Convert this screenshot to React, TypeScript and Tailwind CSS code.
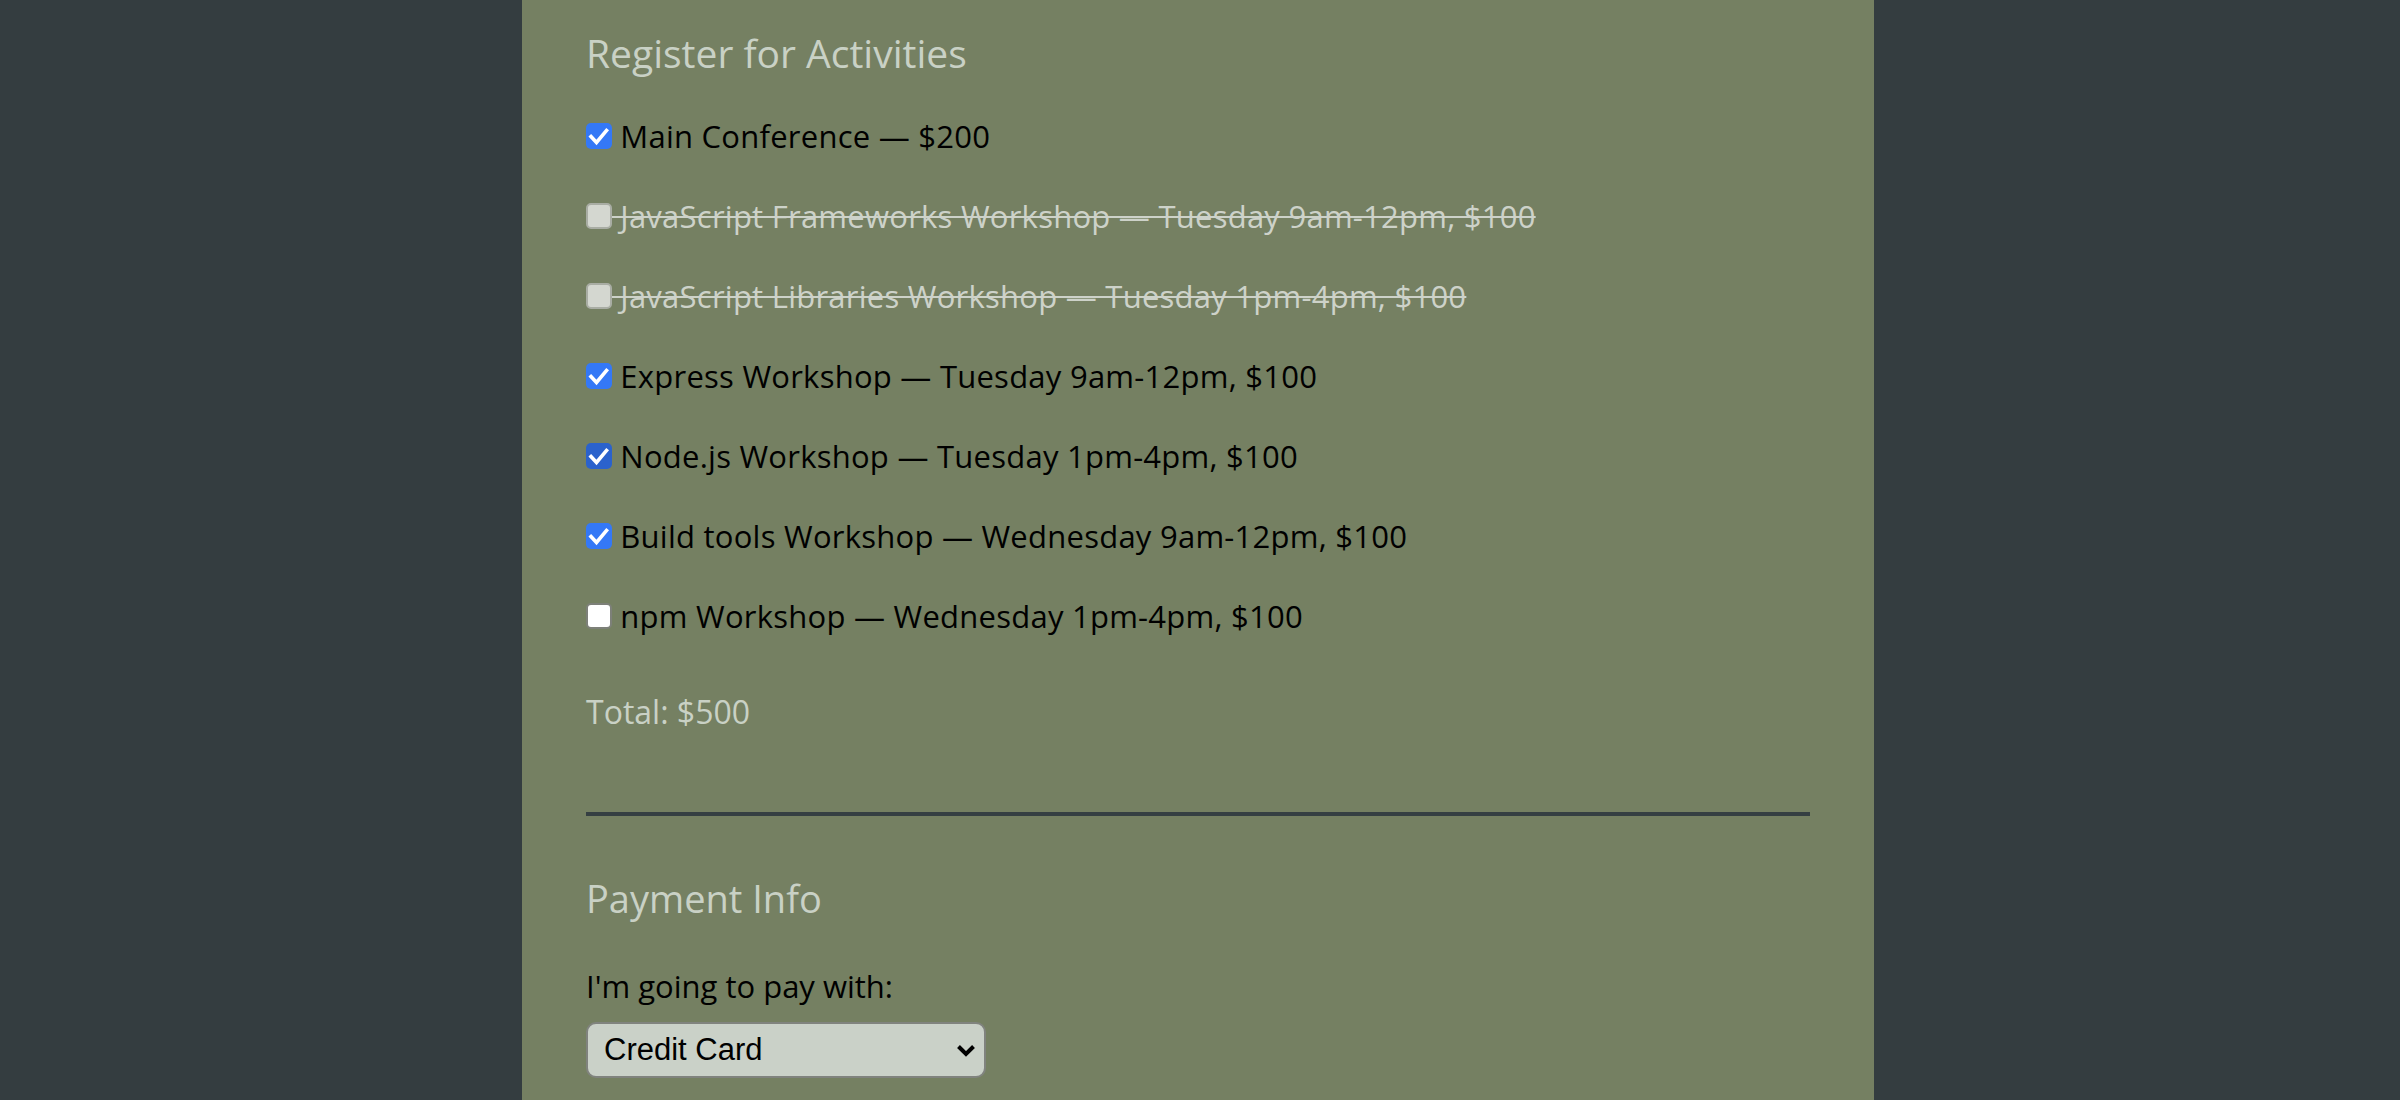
import React from "react";

const Check = ({ dark }: { dark?: boolean }) => (
  <span
    className={`flex h-[26px] w-[26px] shrink-0 items-center justify-center rounded-[5px] ${
      dark ? "bg-[#2b62cc]" : "bg-[#3478f6]"
    }`}
  >
    <svg width="26" height="26" viewBox="0 0 26 26">
      <path d="M5 13.5 L10.5 19.5 L20.5 7.5" fill="none" stroke="#fff" strokeWidth="3.6" strokeLinecap="square" strokeLinejoin="miter" />
    </svg>
  </span>
);

const Empty = () => (
  <span className="h-[26px] w-[26px] shrink-0 rounded-[5px] border-2 border-[#7d8079] bg-white" />
);

const Disabled = () => (
  <span className="h-[26px] w-[26px] shrink-0 rounded-[5px] border-2 border-[#a9ada4] bg-[#d4d7d0]" />
);

type Row = { text: string; state: "on" | "onDark" | "off" | "disabled" };

const rows: Row[] = [
  { text: "Main Conference — $200", state: "on" },
  { text: "JavaScript Frameworks Workshop — Tuesday 9am-12pm, $100", state: "disabled" },
  { text: "JavaScript Libraries Workshop — Tuesday 1pm-4pm, $100", state: "disabled" },
  { text: "Express Workshop — Tuesday 9am-12pm, $100", state: "on" },
  { text: "Node.js Workshop — Tuesday 1pm-4pm, $100", state: "onDark" },
  { text: "Build tools Workshop — Wednesday 9am-12pm, $100", state: "on" },
  { text: "npm Workshop — Wednesday 1pm-4pm, $100", state: "off" },
];

export default function App() {
  return (
    <div className="h-[1100px] w-full overflow-hidden bg-[#343d40] font-['Open_Sans',sans-serif]">
      <div className="ml-[calc(50%-678px)] min-h-[1100px] w-[1352px] bg-[#758062] px-[64px]">
        <div className="flex h-[96px] items-center pt-[8px]">
          <h2 className="text-[39px] leading-none text-[#c9d1c5]">Register for Activities</h2>
        </div>
        {rows.map((r) => (
          <label key={r.text} className="flex h-[80px] items-center">
            {r.state === "on" && <Check />}
            {r.state === "onDark" && <Check dark />}
            {r.state === "off" && <Empty />}
            {r.state === "disabled" && <Disabled />}
            <span
              className={`whitespace-pre text-[31px] leading-none tracking-[0.25px] ${
                r.state === "disabled" ? "text-[#cdd2c9] line-through decoration-[2px]" : "text-black"
              }`}
            >
              {" " + r.text}
            </span>
          </label>
        ))}
        <div className="flex h-[112px] items-center">
          <p className="text-[32px] leading-none text-[#c9d1c5]">Total: $500</p>
        </div>
        <div className="mt-[44px] h-[4px] w-full bg-[#353f42]" />
        <div className="mt-[52px] flex h-[60px] items-center">
          <h2 className="text-[38px] leading-none text-[#c9d1c5]">Payment Info</h2>
        </div>
        <div className="mt-[28px] flex h-[60px] items-center">
          <label className="text-[31px] leading-none text-black">I'm going to pay with:</label>
        </div>
        <div className="relative mt-[6px] h-[56px] w-[400px]">
          <select
            defaultValue="credit card"
            className="h-full w-full appearance-none rounded-[10px] border-2 border-[#80837e] bg-[#cad1c8] pl-[16px] font-['Liberation_Sans',Arial,sans-serif] text-[31px] text-black outline-none"
          >
            <option value="credit card">Credit Card</option>
            <option value="paypal">PayPal</option>
            <option value="bitcoin">Bitcoin</option>
          </select>
          <svg className="pointer-events-none absolute right-[10px] top-[22px]" width="20" height="13" viewBox="0 0 20 13">
            <path d="M2.5 2.5 L10 10 L17.5 2.5" fill="none" stroke="#000" strokeWidth="4" />
          </svg>
        </div>
      </div>
    </div>
  );
}
